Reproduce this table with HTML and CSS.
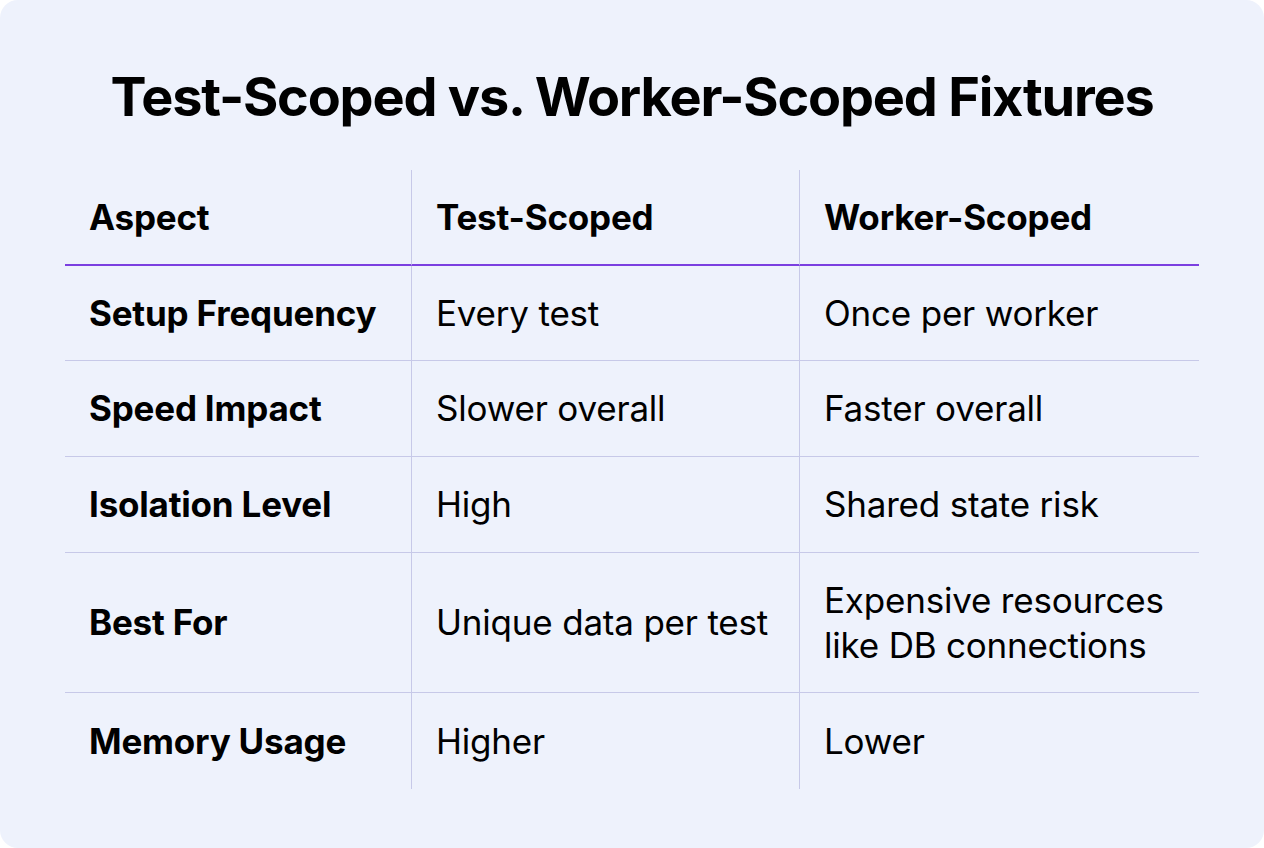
FILE: index.html
```html
<!DOCTYPE html>
<html lang="en">
<head>
<meta charset="utf-8">
<title>Test-Scoped vs. Worker-Scoped Fixtures</title>
<link rel="stylesheet" href="styles.css">
</head>
<body>
<main class="card">
  <h1 class="title">Test-Scoped vs. Worker-Scoped Fixtures</h1>
  <div class="grid">
    <div class="cell head">Aspect</div>
    <div class="cell head col">Test-Scoped</div>
    <div class="cell head col">Worker-Scoped</div>

    <div class="cell label">Setup Frequency</div>
    <div class="cell col">Every test</div>
    <div class="cell col">Once per worker</div>

    <div class="cell label">Speed Impact</div>
    <div class="cell col">Slower overall</div>
    <div class="cell col">Faster overall</div>

    <div class="cell label">Isolation Level</div>
    <div class="cell col">High</div>
    <div class="cell col">Shared state risk</div>

    <div class="cell label">Best For</div>
    <div class="cell col">Unique data per test</div>
    <div class="cell col">Expensive resources like DB connections</div>

    <div class="cell label last">Memory Usage</div>
    <div class="cell col last">Higher</div>
    <div class="cell col last">Lower</div>
  </div>
</main>
</body>
</html>
```

FILE: styles.css
```css
html, body {
  margin: 0;
  padding: 0;
  background: #ffffff;
}

body {
  font-family: Inter, "Noto Sans", "Liberation Sans", sans-serif;
  color: #000000;
}

.card {
  width: 1264px;
  height: 848px;
  box-sizing: border-box;
  background: #eef2fc;
  border-radius: 18px;
  padding: 62px 65px 0 65px;
}

.title {
  margin: 0;
  text-align: center;
  font-size: 54px;
  font-weight: 700;
  line-height: 70px;
  letter-spacing: -1.2px;
}

.grid {
  margin-top: 38px;
  display: grid;
  grid-template-columns: 346px 388px 400px;
  grid-template-rows: 96px 95px 96px 96px 140px 96px;
}

.cell {
  box-sizing: border-box;
  display: flex;
  align-items: center;
  padding: 0 24px;
  font-size: 35px;
  line-height: 45px;
  letter-spacing: -0.2px;
  border-bottom: 1px solid #c7c9e8;
}

.col {
  border-left: 1px solid #c7c9e8;
  padding-left: 24px;
}

.head {
  font-weight: 700;
  border-bottom: 2px solid #7b3fe0;
}

.label {
  font-weight: 700;
}

.last {
  border-bottom: none;
}
```
